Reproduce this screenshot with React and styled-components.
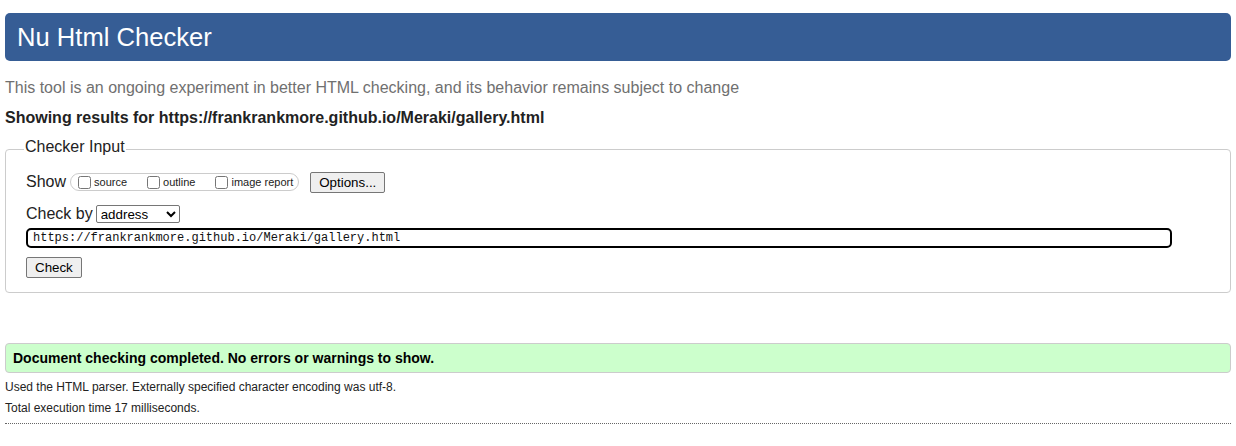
import React from 'react'
import styled, { createGlobalStyle } from 'styled-components'

const GlobalStyle = createGlobalStyle`
  body {
    margin: 0;
    background: #fff;
    font-family: "Liberation Sans", Arial, sans-serif;
    color: #000;
  }
`

const Page = styled.div`
  padding: 13px 5px 0;
`

const Header = styled.h1`
  margin: 0;
  height: 48px;
  line-height: 48px;
  padding-left: 12px;
  background: #365d95;
  border-radius: 5px;
  color: #fff;
  font-size: 25.6px;
  font-weight: normal;
`

const Intro = styled.p`
  margin: 17px 0 0;
  line-height: 20px;
  font-size: 16px;
  color: #707070;
`

const Results = styled.p`
  margin: 10px 0 0;
  line-height: 20px;
  font-size: 16px;
  font-weight: bold;
  color: #222;
`

const Fieldset = styled.fieldset`
  margin: 10px 0 0;
  padding: 11px 20px 14px;
  border: 1px solid #ccc;
  border-radius: 4px;
  min-width: 0;
`

const Legend = styled.legend`
  margin-left: -2px;
  padding: 0 1px 4px;
  font-size: 16px;
  line-height: 18px;
  color: #222;
`

const Row = styled.div`
  display: flex;
  align-items: center;
  height: ${p => p.$h || 22}px;
  margin-top: ${p => p.$mt || 0}px;
`

const RowLabel = styled.span`
  font-size: 16px;
  color: #222;
  margin-right: ${p => p.$gap || 4}px;
`

const Pill = styled.span`
  display: inline-flex;
  align-items: center;
  height: 16px;
  padding: 0 5px 0 6px;
  border: 1px solid #ccc;
  border-radius: 9px;
  gap: 19px;
`

const CheckLabel = styled.label`
  display: inline-flex;
  align-items: center;
  font-size: 11px;
  color: #222;
`

const Box = styled.input`
  width: 13px;
  height: 13px;
  margin: 0 3px 0 1px;
`

const Button = styled.button`
  font-family: "Liberation Sans", Arial, sans-serif;
  font-size: 13.33px;
  height: 21px;
  padding: 0 ${p => p.$px || 7}px;
  background: #efefef;
  border: 1px solid #767676;
  border-radius: 2px;
  color: #000;
  margin-left: ${p => p.$ml || 0}px;
`

const Select = styled.select`
  font-family: "Liberation Sans", Arial, sans-serif;
  font-size: 13.33px;
  width: 84px;
  height: 18px;
  padding: 0;
  border: 1px solid #767676;
  border-radius: 2px;
  background: #fff;
  color: #000;
`

const UrlInput = styled.input`
  display: block;
  box-sizing: border-box;
  width: 1146px;
  height: 20px;
  margin-top: 4px;
  padding: 0 5px;
  border: 2px solid #000;
  border-radius: 5px;
  font-family: "Liberation Mono", "DejaVu Sans Mono", monospace;
  font-size: 12px;
  color: #111;
  outline: none;
`

const CheckRow = styled.div`
  margin-top: 9px;
  display: flex;
`

const Success = styled.div`
  margin-top: 50px;
  height: 28px;
  line-height: 28px;
  padding-left: 7px;
  background: #ccffcc;
  border: 1px solid #ccc;
  border-radius: 4px;
  font-size: 14px;
  font-weight: bold;
`

const Detail = styled.p`
  margin: ${p => p.$mt || 0}px 0 0;
  line-height: 21px;
  font-size: 12px;
  color: #222;
`

const Rule = styled.hr`
  margin: 4px 0 0;
  border: none;
  border-top: 1px dotted #666;
`

export default function App() {
  return (
    <Page>
      <GlobalStyle />
      <Header>Nu Html Checker</Header>
      <Intro>
        This tool is an ongoing experiment in better HTML checking, and its behavior remains subject to change
      </Intro>
      <Results>Showing results for https://frankrankmore.github.io/Meraki/gallery.html</Results>

      <Fieldset>
        <Legend>Checker Input</Legend>
        <Row>
          <RowLabel>Show</RowLabel>
          <Pill>
            <CheckLabel><Box type="checkbox" />source</CheckLabel>
            <CheckLabel><Box type="checkbox" />outline</CheckLabel>
            <CheckLabel><Box type="checkbox" />image report</CheckLabel>
          </Pill>
          <Button $ml={11} $px={8}>Options...</Button>
        </Row>
        <Row $h={20} $mt={11}>
          <RowLabel $gap={3}>Check by</RowLabel>
          <Select defaultValue="address">
            <option value="address">address</option>
            <option value="upload">file upload</option>
            <option value="text">text input</option>
          </Select>
        </Row>
        <UrlInput type="url" defaultValue="https://frankrankmore.github.io/Meraki/gallery.html" />
        <CheckRow>
          <Button $px={8}>Check</Button>
        </CheckRow>
      </Fieldset>

      <Success>Document checking completed. No errors or warnings to show.</Success>
      <Detail $mt={4}>Used the HTML parser. Externally specified character encoding was utf-8.</Detail>
      <Detail>Total execution time 17 milliseconds.</Detail>
      <Rule />
    </Page>
  )
}
